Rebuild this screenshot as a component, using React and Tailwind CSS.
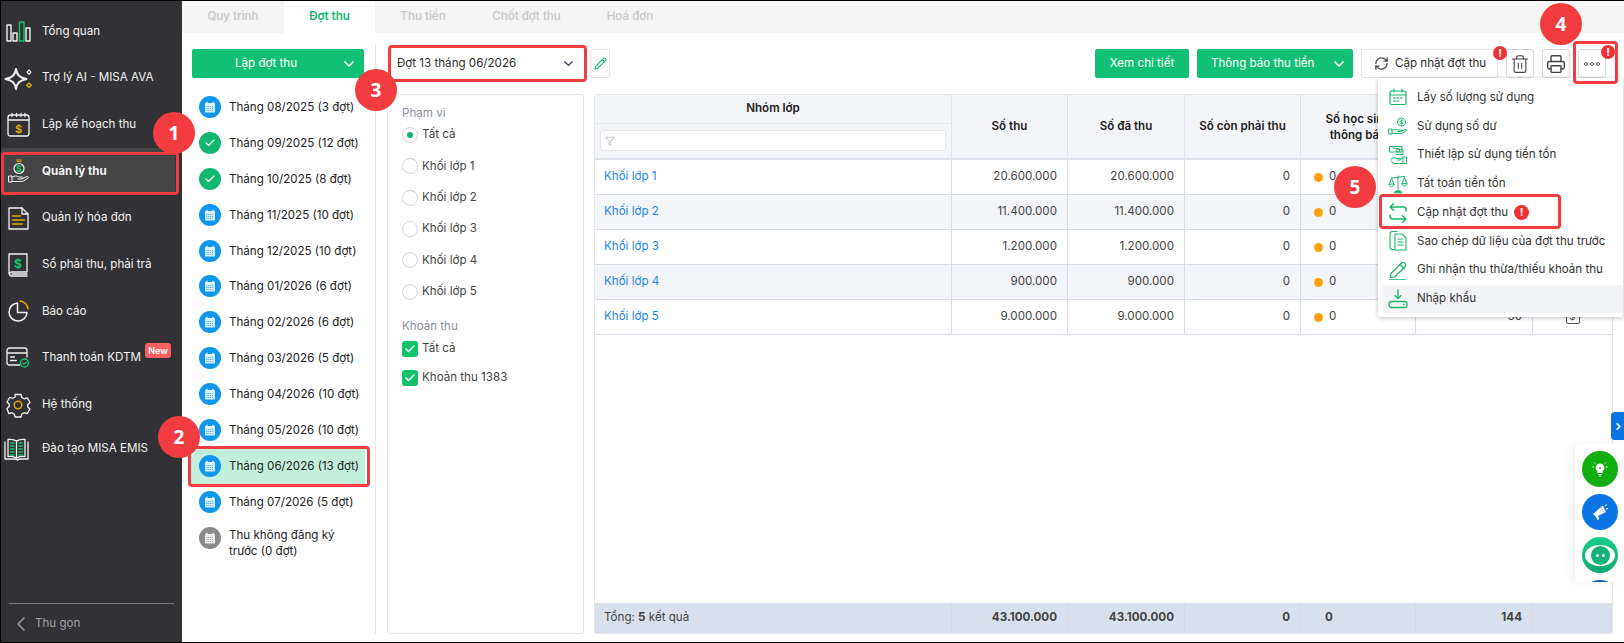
import { Check, ChevronDown, ChevronLeft, ChevronRight, Pencil, RefreshCw, Trash2, Printer, Filter } from "lucide-react";

const W = "#f2f2f2";
const Y = "#e0a800";
const G = "#19b868";

function Svg({ children, size = 32, box = 32, className = "" }) {
  return (
    <svg width={size} height={size} viewBox={`0 0 ${box} ${box}`} fill="none" strokeLinecap="round" strokeLinejoin="round" className={className}>
      {children}
    </svg>
  );
}

const navIcons = {
  overview: (
    <Svg>
      <g strokeWidth="1.4">
        <rect x="3" y="10" width="4" height="16" stroke={W} />
        <rect x="9" y="18" width="4" height="8" stroke={W} />
        <rect x="15.500" y="7" width="4.500" height="19" stroke="#12c26a" />
        <rect x="22" y="13" width="4" height="13" stroke={W} />
      </g>
    </Svg>
  ),
  ai: (
    <Svg>
      <path d="M12 7c1 6 3.500 8.700 10.500 10-7 1.300-9.500 4-10.500 10-1-6-3.500-8.700-10.500-10 7-1.300 9.500-4 10.500-10z" stroke={W} strokeWidth="2" />
      <path d="M25 8l2 2.200-2 2.200-2-2.200z" stroke={W} strokeWidth="1.200" />
      <path d="M25 21l2.300 2.300-2.300 2.300-2.300-2.300z" stroke={Y} strokeWidth="1.400" />
    </Svg>
  ),
  plan: (
    <Svg>
      <rect x="4" y="6" width="21" height="21" rx="2.500" stroke={W} strokeWidth="1.300" />
      <path d="M4 11h21M8 4.500v3M12.500 4.500v3M17 4.500v3M21 4.500v3" stroke={W} strokeWidth="1.300" />
      <text x="14.500" y="23.500" textAnchor="middle" fontSize="11" fontWeight="700" fill={Y} fontFamily="Inter, sans-serif">$</text>
    </Svg>
  ),
  money: (
    <Svg>
      <circle cx="15" cy="13.500" r="5" stroke={W} strokeWidth="1.200" />
      <text x="15" y="17" textAnchor="middle" fontSize="9" fontWeight="700" fill="#12c26a" fontFamily="Inter, sans-serif">$</text>
      <path d="M13 6.500h4M12.500 5h5" stroke={Y} strokeWidth="1" />
      <path d="M5 21h3v6H5zM8 22c3-1.500 5-1.200 7 0h3c1.200 0 1.200 2 0 2h-4M18 23.500l5-2c1.300-.3 1.700 1 .8 1.800l-5.300 3.200H8" stroke={W} strokeWidth="1" />
    </Svg>
  ),
  invoice: (
    <Svg>
      <path d="M5 6h13l6 6v15H5z" stroke={W} strokeWidth="1.300" />
      <path d="M18 6v6h6" stroke={W} strokeWidth="1.300" />
      <path d="M8.500 14h8M8.500 18h12M8.500 22h10" stroke={Y} strokeWidth="1.500" />
    </Svg>
  ),
  book: (
    <Svg>
      <path d="M5 5h18v18H7.500C5 23 5 27 7.500 27H23M5 25V5M8 25h15" stroke={W} strokeWidth="1.300" />
      <text x="14" y="18.500" textAnchor="middle" fontSize="12" fontWeight="700" fill="#12c26a" fontFamily="Inter, sans-serif">$</text>
    </Svg>
  ),
  chart: (
    <Svg>
      <path d="M13.500 8a9 9 0 1 0 9.500 9.500h-9.500z" stroke={W} strokeWidth="1.500" />
      <path d="M16 6a8.500 8.500 0 0 1 8 8" stroke={Y} strokeWidth="1.500" />
    </Svg>
  ),
  card: (
    <Svg>
      <path d="M16 23H5.500A2.500 2.500 0 0 1 3 20.500v-12A2.500 2.500 0 0 1 5.500 6h15A2.500 2.500 0 0 1 23 8.500V15M3 11h20" stroke={W} strokeWidth="1.300" />
      <path d="M6.500 15h4M6.500 18.500h6" stroke={W} strokeWidth="1.300" />
      <circle cx="20.500" cy="21" r="4" stroke="#12c26a" strokeWidth="1.500" />
      <path d="M18.800 21l1.300 1.300 2.200-2.200" stroke="#12c26a" strokeWidth="1.200" />
    </Svg>
  ),
  gear: (
    <Svg>
      <path d="M11 5.500h6l.8 3 2.400 1.300 3-1 2.800 4.700-2.200 2v2.500l2.200 2-2.800 4.700-3-1-2.400 1.300-.8 3h-6l-.8-3-2.400-1.300-3 1L3 19.500l2.200-2V15l-2.200-2 2.800-4.700 3 1 2.400-1.300z" stroke={W} strokeWidth="1.300" />
      <circle cx="14" cy="16" r="3.800" stroke={Y} strokeWidth="1.500" />
    </Svg>
  ),
  train: (
    <Svg>
      <path d="M1 9v17h9.500c1.500 0 2.500.5 3 1 .5-.5 1.500-1 3-1H24V9" stroke={W} strokeWidth="1.300" />
      <path d="M12.500 8c-2-1.500-5-2-8.500-1.500v17c3.500-.5 6.500 0 8.500 1.500 2-1.500 5-2 8.500-1.500v-17C17.500 6 14.500 6.500 12.500 8zM12.500 8v17" stroke={W} strokeWidth="1.300" />
      <path d="M6.500 10h3.500M6.500 13h3.500M6.500 16h3.500M6.500 19h3.500M6.500 22h3.500M15 10h3.500M15 13h3.500M15 16h3.500M15 19h3.500M15 22h3.500" stroke="#12c26a" strokeWidth="1.500" />
    </Svg>
  ),
};

const menuIcons = {
  calendar: (
    <Svg size={20} box={20}>
      <rect x="2" y="4" width="16" height="13.500" rx="1.500" stroke={G} strokeWidth="1.200" />
      <path d="M2 8h16M6 2v3M14 2v3" stroke={G} strokeWidth="1.200" />
      <path d="M5.500 11h2M9 11h2M12.500 11h2M5.500 14h2M9 14h2" stroke={G} strokeWidth="1.200" />
    </Svg>
  ),
  hand: (
    <Svg size={20} box={20}>
      <circle cx="13.500" cy="6" r="4" stroke={G} strokeWidth="1" />
      <path d="M13.500 3.500v5M15 4.800c-1-.8-3-.5-2.800.7.200 1 2.800.5 2.800 1.500 0 1-2.200 1.100-3 .3" stroke={G} strokeWidth=".8" />
      <path d="M1 13h3v5H1zM4 14c2-1 4-1 6 0h3c1 0 1 1.500 0 1.500h-3M13 15l5-1.500c1 0 1 1 .5 1.300l-5 2.700H4" stroke={G} strokeWidth="1" />
    </Svg>
  ),
  cash: (
    <Svg size={20} box={20}>
      <path d="M2 1.500h12v5.500H2zM5 3l10 1.500v5H8" stroke={G} strokeWidth="1" />
      <circle cx="10" cy="5.500" r="1.700" stroke={G} strokeWidth=".9" />
      <path d="M3 14c2-1.500 4-1.500 6-.5h3c1 0 1 1.500 0 1.500H9M12 14.500l3-2v6h-9L3 16" stroke={G} strokeWidth="1" />
      <path d="M15 12h3.500v6.500H15" stroke={G} strokeWidth="1" />
    </Svg>
  ),
  scale: (
    <Svg size={20} box={20}>
      <path d="M10 2v13M3.500 4l13-1.500M3.500 4L1 10.500M3.500 4L6 10.500M16.500 3.500L14 10M16.500 3.500L19 10" stroke={G} strokeWidth="1" />
      <path d="M1 10.500c.5 3 4.500 3 5 0zM14 10c.5 3 4.500 3 5 0z" stroke={G} strokeWidth="1" />
      <path d="M6 18.500c1-2.500 7-2.500 8 0z" fill={G} stroke={G} strokeWidth="1" />
    </Svg>
  ),
  swap: (
    <Svg size={20} box={20}>
      <path d="M18 8V6.500A2.500 2.500 0 0 0 15.500 4H2M5.500 .8L2 4l3.500 3.200" stroke={G} strokeWidth="1.500" />
      <path d="M2 12v1.500A2.500 2.500 0 0 0 4.500 16H18M14.500 12.800L18 16l-3.500 3.200" stroke={G} strokeWidth="1.500" />
    </Svg>
  ),
  copy: (
    <Svg size={20} box={20}>
      <path d="M6 18.500H4.500A2.500 2.500 0 0 1 2 16V3a2.500 2.500 0 0 1 2.500-2.500H9" stroke={G} strokeWidth="1.100" />
      <path d="M7 3h7l4 4v12H7z" stroke={G} strokeWidth="1.100" />
      <path d="M10 8h5M10 11h5M10 14h5" stroke={G} strokeWidth="1.100" />
    </Svg>
  ),
  pen: (
    <Svg size={20} box={20}>
      <path d="M3 13.500L13.500 3c1-1 3-.5 3.700.5.700 1 .800 2.500-.2 3.500L6.500 17 2.500 17.500z" stroke={G} strokeWidth="1.200" />
      <path d="M12 4.500l4 4" stroke={G} strokeWidth="1.200" />
      <path d="M1.500 20h16" stroke={G} strokeWidth="1.400" />
    </Svg>
  ),
  import: (
    <Svg size={20} box={20}>
      <path d="M10 1v8M7 6.500L10 9.500l3-3" stroke={G} strokeWidth="1.300" />
      <rect x="1" y="12.500" width="18" height="6" rx="2.500" stroke={G} strokeWidth="1.300" />
      <path d="M15.500 15.500h.5" stroke={G} strokeWidth="1.300" />
    </Svg>
  ),
};

const navItems = [
  { icon: "overview", label: "Tổng quan" },
  { icon: "ai", label: "Trợ lý AI - MISA AVA" },
  { icon: "plan", label: "Lập kế hoạch thu" },
  { icon: "money", label: "Quản lý thu", active: true },
  { icon: "invoice", label: "Quản lý hóa đơn" },
  { icon: "book", label: "Sổ phải thu, phải trả" },
  { icon: "chart", label: "Báo cáo" },
  { icon: "card", label: "Thanh toán KDTM", badge: true },
  { icon: "gear", label: "Hệ thống" },
  { icon: "train", label: "Đào tạo MISA EMIS", last: true },
];

const months = [
  { label: "Tháng 08/2025 (3 đợt)" },
  { label: "Tháng 09/2025 (12 đợt)", done: true },
  { label: "Tháng 10/2025 (8 đợt)", done: true },
  { label: "Tháng 11/2025 (10 đợt)" },
  { label: "Tháng 12/2025 (10 đợt)" },
  { label: "Tháng 01/2026 (6 đợt)" },
  { label: "Tháng 02/2026 (6 đợt)" },
  { label: "Tháng 03/2026 (5 đợt)" },
  { label: "Tháng 04/2026 (10 đợt)" },
  { label: "Tháng 05/2026 (10 đợt)" },
  { label: "Tháng 06/2026 (13 đợt)", active: true },
  { label: "Tháng 07/2026 (5 đợt)" },
  { label: "Thu không đăng ký trước (0 đợt)", gray: true },
];

const rows = [
  { name: "Khối lớp 1", total: "20.600.000", paid: "20.600.000" },
  { name: "Khối lớp 2", total: "11.400.000", paid: "11.400.000" },
  { name: "Khối lớp 3", total: "1.200.000", paid: "1.200.000" },
  { name: "Khối lớp 4", total: "900.000", paid: "900.000" },
  { name: "Khối lớp 5", total: "9.000.000", paid: "9.000.000", count: "30" },
];

const menu = [
  { icon: "calendar", label: "Lấy số lượng sử dụng" },
  { icon: "hand", label: "Sử dụng số dư" },
  { icon: "cash", label: "Thiết lập sử dụng tiền tồn" },
  { icon: "scale", label: "Tất toán tiền tồn" },
  { icon: "swap", label: "Cập nhật đợt thu", alert: true },
  { icon: "copy", label: "Sao chép dữ liệu của đợt thu trước" },
  { icon: "pen", label: "Ghi nhận thu thừa/thiếu khoản thu" },
  { icon: "import", label: "Nhập khẩu", hover: true },
];

const cols = "grid grid-cols-[357px_116px_117px_116px_115px_117px_1fr]";

function Marker({ n, className }) {
  return (
    <div className={`absolute z-40 w-[42px] h-[42px] rounded-full bg-[#f23c3f] text-white flex items-center justify-center text-[19px] font-bold font-['Open_Sans',sans-serif] ${className}`}>
      {n}
    </div>
  );
}

function Alert({ className }) {
  return (
    <span className={`absolute z-30 w-[14px] h-[14px] rounded-full bg-[#ee3134] text-white text-[11px] font-bold leading-[14px] text-center ${className}`}>!</span>
  );
}

function MonthIcon({ done, gray }) {
  if (done) {
    return (
      <span className="w-[22px] h-[22px] shrink-0 rounded-full bg-[#12b76f] flex items-center justify-center">
        <Check size={12} color="white" strokeWidth={2.5} />
      </span>
    );
  }
  return (
    <span className={`w-[22px] h-[22px] shrink-0 rounded-full flex items-center justify-center ${gray ? "bg-[#8a8a8a]" : "bg-[#0f97ee]"}`}>
      <svg width="12" height="12" viewBox="0 0 12 12">
        <path d="M1 2h10v9.500H1z" fill="white" fillOpacity="0.85" />
        <path d="M3 .8v2M9 .8v2" stroke="white" strokeWidth="1.200" />
        <path d="M2.500 5.500h7M2.500 7.500h7M2.500 9.500h7" stroke={gray ? "#8a8a8a" : "#0f97ee"} strokeWidth="0.800" strokeDasharray="1 .8" />
      </svg>
    </span>
  );
}

function Radio({ label, checked }) {
  return (
    <div className="flex items-center gap-[4px] h-[31.300px]">
      <span className="w-[16px] h-[16px] rounded-full border border-[#d0d2d6] flex items-center justify-center">
        {checked && <span className="w-[6px] h-[6px] rounded-full bg-[#12b76f]" />}
      </span>
      <span>{label}</span>
    </div>
  );
}

function Tick({ label }) {
  return (
    <div className="flex items-center gap-[4px] h-[29px]">
      <span className="w-[16px] h-[16px] rounded-[3px] bg-[#12c26a] flex items-center justify-center">
        <Check size={12} color="white" strokeWidth={3} />
      </span>
      <span>{label}</span>
    </div>
  );
}

export default function App() {
  return (
    <div className="relative w-[1624px] h-[643px] overflow-hidden bg-white border-t border-b border-l border-black flex text-[11.600px] text-[#2c2c2c] font-['Inter',sans-serif]">
      {/* Sidebar */}
      <aside className="w-[181px] shrink-0 bg-[#323135] text-[#f2f2f2] flex flex-col pt-[7px]">
        {navItems.map((item) => (
          <div key={item.label} className={`relative flex items-center pl-[3px] ${item.last ? "h-[42px]" : "h-[46.700px]"} ${item.active ? "bg-[#444444] font-bold mr-[7px] rounded-[3px]" : ""}`}>
            <span className="w-[38px] shrink-0 flex justify-start">{navIcons[item.icon]}</span>
            <span>{item.label}</span>
            {item.badge && (
              <span className="absolute left-[144px] top-[8px] w-[26px] h-[15px] bg-[#f86060] rounded-[3px] text-center text-[9px] leading-[15px] font-semibold text-white">New</span>
            )}
          </div>
        ))}
        <div className="mt-auto mx-[8px] border-t border-[#77767a] h-[39px] flex items-center pt-[2px] text-[#a0a0a4] gap-[2px]">
          <ChevronLeft size={24} strokeWidth={1.5} />
          <span>Thu gọn</span>
        </div>
      </aside>

      <main className="flex-1 flex flex-col min-w-0">
        {/* Tabs */}
        <div className="h-[32px] shrink-0 bg-[#f5f5f5] flex text-[#c8c8c8] font-medium">
          <div className="w-[102px] flex items-center justify-center">Quy trình</div>
          <div className="w-[91px] flex items-center justify-center bg-white text-[#12b76f] font-semibold">Đợt thu</div>
          <div className="w-[96px] flex items-center justify-center">Thu tiền</div>
          <div className="w-[111px] flex items-center justify-center">Chốt đợt thu</div>
          <div className="w-[96px] flex items-center justify-center">Hoá đơn</div>
        </div>

        <div className="flex-1 flex pt-[11px] pb-[8px] min-h-0">
          {/* Month list */}
          <div className="w-[194px] shrink-0 border-r border-[#e4e5e9] flex flex-col">
            <div className="relative ml-[10px] mr-[11px] mt-[5px] h-[29px] rounded-[2px] bg-[#12c075] text-white flex items-center justify-center pr-[24px] shrink-0">
              Lập đợt thu
              <ChevronDown size={16} strokeWidth={2.5} className="absolute right-[7px]" />
            </div>
            <div className="mt-[11px] pl-[8px] pr-[10px] flex flex-col">
              {months.map((m) => (
                <div key={m.label} className={`flex gap-[8px] pl-[9px] pr-[2px] ${m.gray ? "items-start pt-[7px] h-[52px]" : "items-center h-[35.900px]"} ${m.active ? "bg-[#c2efdc]" : ""}`}>
                  <MonthIcon done={m.done} gray={m.gray} />
                  <span className="leading-[16px] text-[#222]">{m.label}</span>
                </div>
              ))}
            </div>
          </div>

          {/* Right content */}
          <div className="flex-1 min-w-0 flex flex-col pl-[11px] pr-[11px]">
            <div className="h-[50px] shrink-0 flex items-start pt-[5px] pr-[7px]">
              <div className="w-[197px] h-[29px] rounded-[2px] bg-white flex items-center justify-between pl-[10px] pr-[8px]">
                Đợt 13 tháng 06/2026
                <ChevronDown size={15} color="#33334d" />
              </div>
              <div className="ml-[6px] w-[20px] h-[29px] border border-[#e4e5e9] rounded-[2px] flex items-center justify-center">
                <Pencil size={13} color="#12b76f" />
              </div>
              <div className="ml-auto flex gap-[8px]">
                <div className="w-[94px] h-[29px] rounded-[2px] bg-[#12c075] text-white flex items-center justify-center">Xem chi tiết</div>
                <div className="relative w-[156px] h-[29px] rounded-[2px] bg-[#12c075] text-white flex items-center pl-[14px]">
                  Thông báo thu tiền
                  <ChevronDown size={16} strokeWidth={2.5} className="absolute right-[6px]" />
                </div>
                <div className="w-[137px] h-[29px] rounded-[2px] border border-[#e4e5e9] flex items-center pl-[12px] gap-[6px] whitespace-nowrap">
                  <RefreshCw size={15} strokeWidth={2} color="#444" />
                  Cập nhật đợt thu
                </div>
                <div className="w-[28px] h-[29px] rounded-[3px] border border-[#d8d9dd] flex items-center justify-center">
                  <Trash2 size={20} strokeWidth={1.3} color="#444" />
                </div>
                <div className="w-[28px] h-[29px] rounded-[3px] border border-[#d8d9dd] flex items-center justify-center">
                  <Printer size={20} strokeWidth={1.7} color="#444" />
                </div>
                <div className="w-[28px] h-[29px] rounded-[3px] border border-[#d8d9dd] flex items-center justify-center gap-[2px]">
                  <span className="w-[4px] h-[4px] rounded-full border border-[#555]" />
                  <span className="w-[4px] h-[4px] rounded-full border border-[#555]" />
                  <span className="w-[4px] h-[4px] rounded-full border border-[#555]" />
                </div>
              </div>
            </div>

            <div className="flex-1 min-h-0 flex gap-[10px]">
              {/* Filter panel */}
              <div className="w-[197px] shrink-0 border border-[#e4e5e9] rounded-[3px] pl-[14px] pt-[9px] text-[#444]">
                <div className="text-[#8a8f99] mb-[-2.500px] leading-[18px]">Phạm vi</div>
                <Radio label="Tất cả" checked />
                <Radio label="Khối lớp 1" />
                <Radio label="Khối lớp 2" />
                <Radio label="Khối lớp 3" />
                <Radio label="Khối lớp 4" />
                <Radio label="Khối lớp 5" />
                <div className="text-[#8a8f99] mt-[9.500px] mb-[-0.500px] leading-[18px]">Khoản thu</div>
                <Tick label="Tất cả" />
                <Tick label="Khoản thu 1383" />
              </div>

              {/* Table */}
              <div className="flex-1 min-w-0 border border-[#e4e5e9] rounded-[3px] flex flex-col">
                <div className={`${cols} h-[65px] shrink-0 bg-[#f4f5f9] border-b-2 border-[#dfe2ea] font-semibold text-[#222]`}>
                  <div className="flex flex-col border-r border-[#dfe2ea]">
                    <div className="h-[29px] flex items-center justify-center border-b border-[#e6e8ee]">Nhóm lớp</div>
                    <div className="px-[5px] pt-[6px]">
                      <div className="h-[21px] bg-white border border-[#e4e5e9] rounded-[3px] flex items-center pl-[4px]">
                        <Filter size={10} color="#888" strokeWidth={1.2} />
                      </div>
                    </div>
                  </div>
                  <div className="flex items-center justify-center border-r border-[#dfe2ea]">Số thu</div>
                  <div className="flex items-center justify-center border-r border-[#dfe2ea]">Số đã thu</div>
                  <div className="flex items-center justify-center border-r border-[#dfe2ea]">Số còn phải thu</div>
                  <div className="flex items-center justify-center text-center border-r border-[#dfe2ea] leading-[16px]">Số học sinh<br />thông báo</div>
                  <div className="border-r border-[#dfe2ea]" />
                  <div />
                </div>
                {rows.map((r, i) => (
                  <div key={r.name} className={`${cols} h-[35px] shrink-0 border-b border-[#d8dce8] ${i % 2 ? "bg-[#f4f5f9]" : "bg-white"} text-[#444]`}>
                    <div className="flex items-center pl-[9px] text-[#1b84f0] border-r border-[#d8dce8]">{r.name}</div>
                    <div className="flex items-center justify-end pr-[10px] border-r border-[#d8dce8]">{r.total}</div>
                    <div className="flex items-center justify-end pr-[10px] border-r border-[#d8dce8]">{r.paid}</div>
                    <div className="flex items-center justify-end pr-[10px] border-r border-[#d8dce8]">0</div>
                    <div className="flex items-center gap-[6px] pl-[13px] border-r border-[#d8dce8]">
                      <span className="w-[9px] h-[9px] rounded-full bg-[#ffa20d]" />0
                    </div>
                    <div className="flex items-center justify-end pr-[10px] border-r border-[#d8dce8]">{r.count}</div>
                    <div className="flex items-center justify-center">
                      {r.count && <span className="w-[14px] h-[14px] border border-[#555] rounded-[2px] text-[9px] leading-[12px] text-center">$</span>}
                    </div>
                  </div>
                ))}
                <div className="flex-1" />
                <div className={`${cols} h-[30px] shrink-0 bg-[#d9e0ed] text-[#444] font-bold`}>
                  <div className="flex items-center pl-[9px] font-normal border-r border-[#d2d9e6]">Tổng:&nbsp;<b>5</b>&nbsp;kết quả</div>
                  <div className="flex items-center justify-end pr-[10px] border-r border-[#d2d9e6]">43.100.000</div>
                  <div className="flex items-center justify-end pr-[10px] border-r border-[#d2d9e6]">43.100.000</div>
                  <div className="flex items-center justify-end pr-[10px] border-r border-[#d2d9e6]">0</div>
                  <div className="flex items-center pl-[24px] border-r border-[#d2d9e6]">0</div>
                  <div className="flex items-center justify-end pr-[10px] border-r border-[#d2d9e6]">144</div>
                  <div />
                </div>
              </div>
            </div>
          </div>
        </div>
      </main>

      {/* Dropdown menu */}
      <div className="absolute z-20 left-[1377px] top-[77px] w-[245px] h-[239px] bg-white rounded-[2px] shadow-[0_1px_5px_rgba(0,0,0,0.25)] pt-[5px] pl-[5px]">
        {menu.map((m) => (
          <div key={m.label} className={`flex items-center h-[28.800px] pl-[5px] gap-[9px] ${m.hover ? "bg-[#f3f4f8]" : ""}`}>
            <span className="w-[20px] h-[20px] shrink-0">{menuIcons[m.icon]}</span>
            <span className="text-[#333]">{m.label}</span>
            {m.alert && (
              <span className="w-[15px] h-[15px] ml-[-3px] rounded-full bg-[#ee3134] text-white text-[11px] font-bold leading-[15px] text-center">!</span>
            )}
          </div>
        ))}
      </div>

      {/* Floating shortcuts */}
      <div className="absolute z-10 left-[1610px] top-[411px] w-[14px] h-[28px] rounded-l-[4px] bg-[#0b74e5] flex items-center justify-center">
        <ChevronRight size={11} color="white" strokeWidth={3.5} />
      </div>
      <div className="absolute z-10 left-[1574px] top-[443px] w-[50px] h-[138px] bg-white rounded-tl-[6px] shadow-[-4px_0_10px_rgba(0,0,0,0.06)] overflow-hidden flex flex-col items-center pt-[7px] gap-[7px]">
        <span className="w-[36px] h-[36px] shrink-0 rounded-full bg-[#12ad0e] flex items-center justify-center">
          <svg width="18" height="18" viewBox="0 0 18 18">
            <path d="M9 3.500a4.300 4.300 0 0 0-2.500 7.800v1.700h5v-1.700A4.300 4.300 0 0 0 9 3.500z" fill="white" />
            <path d="M7 14.500h4M7.800 16h2.400M1.500 7h1.500M15 7h1.500M3 2.500l1 1M15 2.500l-1 1" stroke="white" strokeWidth="1" />
            <circle cx="9" cy="8" r="1" fill="#12ad0e" />
          </svg>
        </span>
        <span className="w-[36px] h-[36px] shrink-0 rounded-full bg-[#0b74e5] flex items-center justify-center">
          <svg width="20" height="20" viewBox="0 0 20 20">
            <path d="M3 12l8-7 3 6-8 4zM6 15l2-1 1.500 3-2 1z" fill="white" />
            <path d="M12 4l3 6.500" stroke="white" strokeWidth="2" />
            <path d="M15 4l2-1.500M16 7l2-.5" stroke="white" strokeWidth="1" />
          </svg>
        </span>
        <span className="w-[36px] h-[36px] shrink-0 rounded-full bg-[linear-gradient(180deg,#14d08a,#13a874)] flex items-center justify-center">
          <span className="w-[30px] h-[21px] rounded-[50%] bg-white flex items-center justify-center">
            <span className="w-[19px] h-[19px] rounded-full bg-[#12b27a] flex items-center justify-center gap-[3px]">
              <span className="w-[3px] h-[3px] rounded-full bg-white" />
              <span className="w-[3px] h-[3px] rounded-full bg-white" />
            </span>
          </span>
        </span>
        <span className="w-[36px] h-[36px] shrink-0 rounded-full bg-[#1d4fd8]" />
      </div>

      {/* Annotations */}
      <Alert className="left-[1492px] top-[45px]" />
      <Alert className="left-[1600px] top-[44px]" />
      <div className="absolute z-30 left-[0px] top-[151px] w-[178px] h-[43px] border-[3px] border-[#f23c3f] rounded-[4px]" />
      <div className="absolute z-30 left-[187px] top-[445px] w-[182px] h-[41px] border-[3px] border-[#f23c3f] rounded-[4px]" />
      <div className="absolute z-30 left-[387px] top-[44px] w-[199px] h-[37px] border-[3px] border-[#f23c3f] rounded-[4px]" />
      <div className="absolute z-30 left-[1572px] top-[40px] w-[45px] h-[43px] border-[3px] border-[#f23c3f] rounded-[4px]" />
      <div className="absolute z-30 left-[1378px] top-[193px] w-[182px] h-[35px] border-[3px] border-[#f23c3f] rounded-[4px]" />
      <Marker n="1" className="left-[152px] top-[111px]" />
      <Marker n="2" className="left-[157px] top-[415px]" />
      <Marker n="3" className="left-[354px] top-[68px]" />
      <Marker n="4" className="left-[1539px] top-[2px]" />
      <Marker n="5" className="left-[1333px] top-[165px]" />
    </div>
  );
}
